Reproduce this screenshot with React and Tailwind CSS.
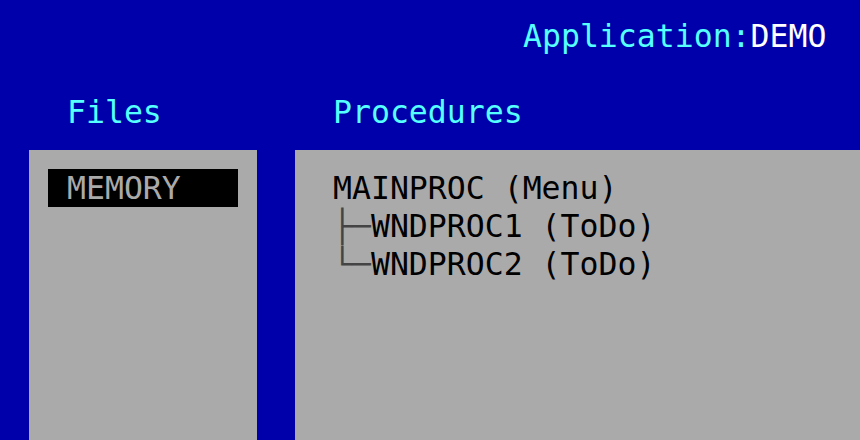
export default function App() {
  return (
    <div
      className="w-[860px] h-[440px] overflow-hidden bg-[#0000AA] flex flex-col text-[31.5px] leading-[38px]"
      style={{ fontFamily: '"DejaVu Sans Mono", monospace' }}
    >
      <div className="h-[38px] mt-[17px] pl-[523px] whitespace-pre">
        <span className="text-[#55FFFF]">Application:</span>
        <span className="text-white">DEMO</span>
      </div>
      <div className="h-[38px] mt-[38px] flex text-[#55FFFF] whitespace-pre">
        <div className="w-[333px] pl-[67px]">Files</div>
        <div>Procedures</div>
      </div>
      <div className="mt-[19px] flex flex-1 gap-[38px] pl-[29px]">
        <div className="w-[228px] bg-[#AAAAAA] pt-[19px] pl-[19px]">
          <div className="w-[190px] h-[38px] bg-black pl-[19px] text-[#AAAAAA] whitespace-pre">
            MEMORY
          </div>
        </div>
        <div className="flex-1 bg-[#AAAAAA] pt-[19px] pl-[38px] text-black whitespace-pre">
          <div className="h-[38px]">MAINPROC (Menu)</div>
          <div className="h-[38px]">
            <span className="text-[#444444]">├─</span>WNDPROC1 (ToDo)
          </div>
          <div className="h-[38px]">
            <span className="text-[#444444]">└─</span>WNDPROC2 (ToDo)
          </div>
        </div>
      </div>
    </div>
  );
}
